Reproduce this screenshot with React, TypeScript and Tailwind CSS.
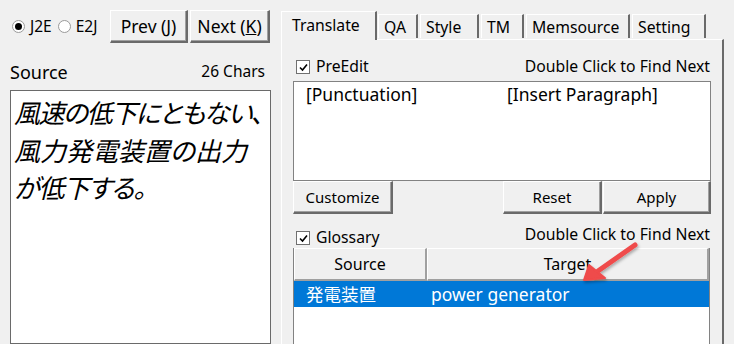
import React from 'react';

const font = { fontFamily: '"Noto Sans", "Noto Sans CJK JP", sans-serif' };

const Radio = ({ checked }: { checked?: boolean }) => (
    <span className="w-[13px] h-[13px] rounded-full border border-[#9a9a9a] bg-white flex items-center justify-center shrink-0">
        {checked && <span className="w-[7px] h-[7px] rounded-full bg-black"></span>}
    </span>
);

const Check = () => (
    <span className="w-[14px] h-[14px] border border-[#707070] bg-white flex items-center justify-center shrink-0">
        <svg width="9" height="9" viewBox="0 0 9 9">
            <path d="M1 4.5 L3.5 7 L8 1.5" fill="none" stroke="#000" strokeWidth="1.6" />
        </svg>
    </span>
);

// classic raised win32 button
const Btn = ({ w, size = 'text-[15px]', children }: { w: string; size?: string; children: React.ReactNode }) => (
    <div className={`${w} ${size} h-[33px] bg-[#f0f0f0] border-t border-l border-white border-b-2 border-r-2 border-b-[#6a6a6a] border-r-[#6a6a6a] shadow-[inset_-1px_-1px_0_#a0a0a0] flex items-center justify-center text-black shrink-0`}>
        {children}
    </div>
);

const Tab = ({ w, label, active }: { w: string; label: string; active?: boolean }) =>
    active ? (
        <div className={`${w} h-[29px] bg-[#f0f0f0] border-t border-l border-white border-r-2 border-r-[#6a6a6a] pl-[10px] pt-[2px] text-[15.75px] text-black z-10 shrink-0`}>
            {label}
        </div>
    ) : (
        <div className={`${w} h-[24px] mt-[3px] bg-[#f0f0f0] border-t border-l border-white border-r-2 border-r-[#6a6a6a] pl-[5px] pt-[2px] text-[15.75px] text-black leading-[20px] shrink-0`}>
            {label}
        </div>
    );

const App = () => {
    return (
        <div className="w-[734px] h-[344px] overflow-hidden bg-[#f0f0f0] flex relative" style={font}>
            {/* Left column */}
            <div className="w-[281px] shrink-0 flex flex-col">
                <div className="flex items-center mt-[10px] h-[33px] pl-[12px]">
                    <div className="w-[98px] flex items-center text-[15.5px] text-black">
                        <Radio checked />
                        <span className="ml-[5px]">J2E</span>
                        <span className="ml-[6px]"><Radio /></span>
                        <span className="ml-[5px]">E2J</span>
                    </div>
                    <Btn w="w-[78px]" size="text-[17.5px]">Prev (<span className="underline">J</span>)</Btn>
                    <div className="w-[2px]"></div>
                    <Btn w="w-[80px]" size="text-[17.5px]">Next (<span className="underline">K</span>)</Btn>
                </div>
                <div className="mt-[16px] h-[26px] pl-[10px] pr-[16px] flex items-center justify-between text-black">
                    <span className="text-[18px]">Source</span>
                    <span className="text-[15.5px]">26 Chars</span>
                </div>
                <div className="mt-[5px] ml-[10px] w-[261px] h-[280px] bg-white border border-[#6a6a6a] pl-[3px] pt-[4px] text-[26px] leading-[37.5px] italic text-black whitespace-nowrap [font-feature-settings:'palt']">
                    <div className="tracking-[-1.5px]">風速の低下にともない、</div>
                    <div>風力発電装置の出力</div>
                    <div className="tracking-[-1px]">が低下する。</div>
                </div>
            </div>

            {/* Right tab control */}
            <div className="w-[443px] shrink-0 flex flex-col pt-[11px]">
                <div className="flex h-[29px] items-start">
                    <Tab w="w-[96px]" label="Translate" active />
                    <div className="w-[1px]"></div>
                    <Tab w="w-[40px]" label="QA" />
                    <div className="w-[2px]"></div>
                    <Tab w="w-[59px]" label="Style" />
                    <div className="w-[2px]"></div>
                    <Tab w="w-[43px]" label="TM" />
                    <div className="w-[2px]"></div>
                    <Tab w="w-[104px]" label="Memsource" />
                    <div className="w-[2px]"></div>
                    <Tab w="w-[74px]" label="Setting" />
                </div>
                <div className="-mt-[1px] flex-1 border-t border-l border-white border-r-2 border-r-[#6a6a6a] pl-[11px] pr-[11px] flex flex-col">
                    <div className="mt-[19px] h-[16px] flex items-center justify-between text-[15.75px] text-black">
                        <div className="flex items-center pl-[3px]">
                            <Check />
                            <span className="ml-[6px]">PreEdit</span>
                        </div>
                        <span className="mr-[1px]">Double Click to Find Next</span>
                    </div>
                    <div className="mt-[6px] h-[100px] bg-white border border-[#828282] flex text-[17.5px] text-black leading-[25px]">
                        <span className="ml-[12px] w-[201px]">[Punctuation]</span>
                        <span>[Insert Paragraph]</span>
                    </div>
                    <div className="flex">
                        <Btn w="w-[100px]">Customize</Btn>
                        <div className="flex-1"></div>
                        <Btn w="w-[99px]">Reset</Btn>
                        <div className="w-[1px]"></div>
                        <Btn w="w-[108px]">Apply</Btn>
                    </div>
                    <div className="mt-[14px] h-[20px] flex items-start justify-between text-[15.75px] text-black">
                        <div className="flex items-center pl-[3px] h-[20px]">
                            <Check />
                            <span className="ml-[6px]">Glossary</span>
                        </div>
                        <span className="mr-[1px] -mt-[4px] leading-[20px]">Double Click to Find Next</span>
                    </div>
                    <div className="flex-1 w-[417px] bg-white border-l border-r border-[#828282] flex flex-col">
                        <div className="h-[33px] flex text-[16px]">
                            <div className="w-[133px] bg-[#f0f0f0] border-t border-l border-white border-r-2 border-b-2 border-r-[#a0a0a0] border-b-[#a0a0a0] flex items-center justify-center text-black">Source</div>
                            <div className="flex-1 bg-[#f0f0f0] border-t border-l border-white border-r-2 border-b-2 border-r-[#a0a0a0] border-b-[#a0a0a0] flex items-center justify-center text-black">Target</div>
                        </div>
                        <div className="h-[26px] bg-[#0078d7] flex items-center text-white text-[17.5px]">
                            <span className="ml-[12px] w-[125px]">発電装置</span>
                            <span>power generator</span>
                        </div>
                    </div>
                </div>
            </div>

            {/* annotation arrow */}
            <svg className="absolute left-0 top-0 pointer-events-none" width="734" height="344">
                <defs>
                    <filter id="sh" x="-20%" y="-20%" width="140%" height="140%">
                        <feDropShadow dx="1" dy="2" stdDeviation="1.5" floodColor="#000" floodOpacity="0.3" />
                    </filter>
                </defs>
                <g filter="url(#sh)">
                    <line x1="635" y1="245" x2="598" y2="271" stroke="#ef4b4b" strokeWidth="5" strokeLinecap="round" />
                    <path d="M584 280 L589 265 L605 278 Z" fill="#ef4b4b" stroke="#ef4b4b" strokeWidth="2" strokeLinejoin="round" />
                </g>
            </svg>
        </div>
    );
};

export default App;
